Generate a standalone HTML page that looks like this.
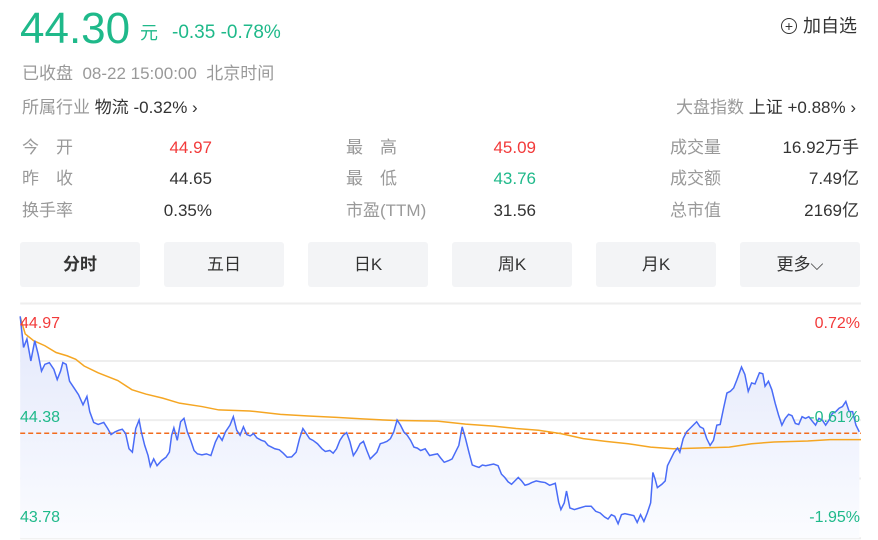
<!DOCTYPE html>
<html><head><meta charset="utf-8"><style>
body{margin:0;width:878px;height:540px;background:#fff;font-family:"Liberation Sans","Noto Sans CJK SC",sans-serif;position:relative;overflow:hidden}
.a{position:absolute;white-space:nowrap;line-height:22px}
.g{color:#999}
.grn{color:#1fb98a}
.red{color:#f23a3a}
.d{color:#333}
.btn{position:absolute;top:242px;width:120px;height:45px;background:#f3f4f6;border-radius:3px;text-align:center;line-height:45px;font-size:17px;color:#333}
.lab{font-size:17px;color:#999}
.val{font-size:17px;text-align:right;width:120px}
</style></head><body>
<div class="a grn" style="left:20px;top:5px;font-size:44px;line-height:48px">44.30</div>
<div class="a grn" style="left:140px;top:22px;font-size:18px">元</div>
<div class="a grn" style="left:172px;top:22px;font-size:19px">-0.35 -0.78%</div>
<div class="a d" style="left:781px;top:15px;font-size:18px"><span style="display:inline-block;width:14px;height:14px;border:1.5px solid #333;border-radius:50%;text-align:center;line-height:14px;font-size:14px;vertical-align:1px;margin-right:6px">+</span>加自选</div>
<div class="a g" style="left:22px;top:63px;font-size:17px">已收盘&nbsp;&nbsp;08-22 15:00:00&nbsp;&nbsp;北京时间</div>
<div class="a" style="left:22px;top:97px;font-size:17px"><span class="g">所属行业</span> <span class="d">物流 -0.32% ›</span></div>
<div class="a" style="right:22px;top:97px;font-size:17px"><span class="g">大盘指数</span> <span class="d">上证 +0.88% ›</span></div>

<div class="a lab" style="left:22px;top:137px">今　开</div><div class="a val red" style="left:92px;top:137px">44.97</div>
<div class="a lab" style="left:22px;top:168px">昨　收</div><div class="a val d" style="left:92px;top:168px">44.65</div>
<div class="a lab" style="left:22px;top:200px">换手率</div><div class="a val d" style="left:92px;top:200px">0.35%</div>
<div class="a lab" style="left:346px;top:137px">最　高</div><div class="a val red" style="left:416px;top:137px">45.09</div>
<div class="a lab" style="left:346px;top:168px">最　低</div><div class="a val grn" style="left:416px;top:168px">43.76</div>
<div class="a lab" style="left:346px;top:200px">市盈(TTM)</div><div class="a val d" style="left:416px;top:200px">31.56</div>
<div class="a lab" style="left:670px;top:137px">成交量</div><div class="a val d" style="left:739px;top:137px">16.92万手</div>
<div class="a lab" style="left:670px;top:168px">成交额</div><div class="a val d" style="left:739px;top:168px">7.49亿</div>
<div class="a lab" style="left:670px;top:200px">总市值</div><div class="a val d" style="left:739px;top:200px">2169亿</div>

<div class="btn" style="left:20px;font-weight:bold">分时</div>
<div class="btn" style="left:164px">五日</div>
<div class="btn" style="left:308px">日K</div>
<div class="btn" style="left:452px">周K</div>
<div class="btn" style="left:596px">月K</div>
<div class="btn" style="left:740px">更多⌵</div>

<svg class="a" style="left:0;top:290px;line-height:normal" width="875" height="250" viewBox="0 0 1560 740" preserveAspectRatio="none">
<defs><linearGradient id="f" x1="0" y1="0" x2="0" y2="1"><stop offset="0" stop-color="#e3e8fb"/><stop offset="1" stop-color="#fbfcff"/></linearGradient></defs>
<g stroke="#eee" stroke-width="2">
<line x1="36" y1="40" x2="1535" y2="40" vector-effect="non-scaling-stroke"/><line x1="36" y1="210" x2="1535" y2="210" vector-effect="non-scaling-stroke"/><line x1="36" y1="385" x2="1535" y2="385" vector-effect="non-scaling-stroke"/><line x1="36" y1="558" x2="1535" y2="558" vector-effect="non-scaling-stroke"/><line x1="36" y1="735" x2="1535" y2="735" vector-effect="non-scaling-stroke"/></g>
<polygon fill="url(#f)" points="36,78 42,170 48,145 55,210 62,150 68,190 74,240 80,220 88,215 96,235 102,265 108,240 112,215 118,220 124,270 132,290 140,310 148,340 155,315 160,360 167,392 175,398 185,392 192,410 198,428 205,420 212,415 218,412 224,425 230,470 236,480 242,410 248,385 252,420 258,460 264,490 268,522 274,500 280,520 288,505 296,495 302,480 306,430 310,408 316,445 322,390 328,380 334,420 340,445 346,475 352,485 360,488 368,485 376,490 384,450 390,430 396,445 402,420 410,400 416,375 422,415 428,430 434,405 440,428 446,432 452,425 458,438 466,445 472,448 478,460 484,465 490,470 498,473 505,483 512,495 520,494 528,480 534,440 540,410 546,425 552,440 558,445 566,455 574,470 580,478 588,475 594,483 600,470 606,445 612,430 618,422 624,450 630,490 636,475 642,455 648,448 654,475 660,500 666,490 672,480 678,455 684,452 690,448 696,440 702,420 708,385 714,400 720,420 726,430 732,445 738,465 744,468 750,475 758,470 766,490 774,487 780,485 786,498 792,510 800,505 806,500 812,480 818,460 824,405 830,440 836,480 842,518 848,522 854,525 860,518 866,520 872,518 880,515 888,520 894,545 900,555 906,568 912,575 918,565 924,555 930,565 936,578 942,575 948,570 956,565 964,568 972,570 980,578 990,572 996,628 1000,650 1006,630 1010,595 1016,645 1024,650 1034,645 1044,640 1054,640 1062,655 1070,660 1078,672 1084,678 1090,665 1096,670 1102,692 1108,665 1114,662 1122,665 1130,668 1136,688 1142,665 1148,685 1154,660 1160,630 1164,540 1168,560 1172,585 1180,575 1186,565 1190,520 1196,500 1202,480 1208,468 1212,480 1218,440 1224,420 1230,410 1236,400 1242,390 1248,405 1254,410 1260,440 1266,460 1272,445 1278,400 1284,398 1290,350 1296,305 1302,300 1308,290 1314,265 1322,228 1328,250 1334,300 1340,275 1346,278 1354,245 1360,248 1364,285 1370,270 1376,295 1382,335 1388,370 1394,400 1400,380 1406,368 1412,372 1418,395 1424,398 1430,375 1436,380 1442,375 1448,388 1454,400 1460,380 1466,385 1472,400 1478,385 1484,365 1490,360 1496,350 1502,345 1508,330 1514,360 1520,360 1526,400 1532,420 1532,735 36,735"/>
<line x1="36" y1="424" x2="1535" y2="424" stroke="#f26b1d" stroke-width="1.5" stroke-dasharray="5,3" vector-effect="non-scaling-stroke"/>
<polyline fill="none" stroke="#f5a623" stroke-width="1.5" vector-effect="non-scaling-stroke" points="36,80 45,130 60,150 80,165 100,185 120,195 135,205 150,225 175,245 210,268 235,295 260,308 290,320 320,335 360,345 390,355 445,358 500,368 550,373 600,377 650,382 700,386 780,388 830,397 880,403 920,410 960,415 1000,425 1040,440 1080,448 1120,455 1160,465 1200,470 1240,468 1300,465 1340,455 1380,450 1440,447 1480,443 1535,443"/>
<polyline fill="none" stroke="#4a6cf7" stroke-width="1.5" vector-effect="non-scaling-stroke" points="36,78 42,170 48,145 55,210 62,150 68,190 74,240 80,220 88,215 96,235 102,265 108,240 112,215 118,220 124,270 132,290 140,310 148,340 155,315 160,360 167,392 175,398 185,392 192,410 198,428 205,420 212,415 218,412 224,425 230,470 236,480 242,410 248,385 252,420 258,460 264,490 268,522 274,500 280,520 288,505 296,495 302,480 306,430 310,408 316,445 322,390 328,380 334,420 340,445 346,475 352,485 360,488 368,485 376,490 384,450 390,430 396,445 402,420 410,400 416,375 422,415 428,430 434,405 440,428 446,432 452,425 458,438 466,445 472,448 478,460 484,465 490,470 498,473 505,483 512,495 520,494 528,480 534,440 540,410 546,425 552,440 558,445 566,455 574,470 580,478 588,475 594,483 600,470 606,445 612,430 618,422 624,450 630,490 636,475 642,455 648,448 654,475 660,500 666,490 672,480 678,455 684,452 690,448 696,440 702,420 708,385 714,400 720,420 726,430 732,445 738,465 744,468 750,475 758,470 766,490 774,487 780,485 786,498 792,510 800,505 806,500 812,480 818,460 824,405 830,440 836,480 842,518 848,522 854,525 860,518 866,520 872,518 880,515 888,520 894,545 900,555 906,568 912,575 918,565 924,555 930,565 936,578 942,575 948,570 956,565 964,568 972,570 980,578 990,572 996,628 1000,650 1006,630 1010,595 1016,645 1024,650 1034,645 1044,640 1054,640 1062,655 1070,660 1078,672 1084,678 1090,665 1096,670 1102,692 1108,665 1114,662 1122,665 1130,668 1136,688 1142,665 1148,685 1154,660 1160,630 1164,540 1168,560 1172,585 1180,575 1186,565 1190,520 1196,500 1202,480 1208,468 1212,480 1218,440 1224,420 1230,410 1236,400 1242,390 1248,405 1254,410 1260,440 1266,460 1272,445 1278,400 1284,398 1290,350 1296,305 1302,300 1308,290 1314,265 1322,228 1328,250 1334,300 1340,275 1346,278 1354,245 1360,248 1364,285 1370,270 1376,295 1382,335 1388,370 1394,400 1400,380 1406,368 1412,372 1418,395 1424,398 1430,375 1436,380 1442,375 1448,388 1454,400 1460,380 1466,385 1472,400 1478,385 1484,365 1490,360 1496,350 1502,345 1508,330 1514,360 1520,360 1526,400 1532,420"/>
</svg>
<div class="a red" style="left:20px;top:313px;font-size:16px">44.97</div>
<div class="a grn" style="left:20px;top:407px;font-size:16px">44.38</div>
<div class="a grn" style="left:20px;top:507px;font-size:16px">43.78</div>
<div class="a red" style="right:18px;top:313px;font-size:16px">0.72%</div>
<div class="a grn" style="right:18px;top:407px;font-size:16px">-0.61%</div>
<div class="a grn" style="right:18px;top:507px;font-size:16px">-1.95%</div>
</body></html>
